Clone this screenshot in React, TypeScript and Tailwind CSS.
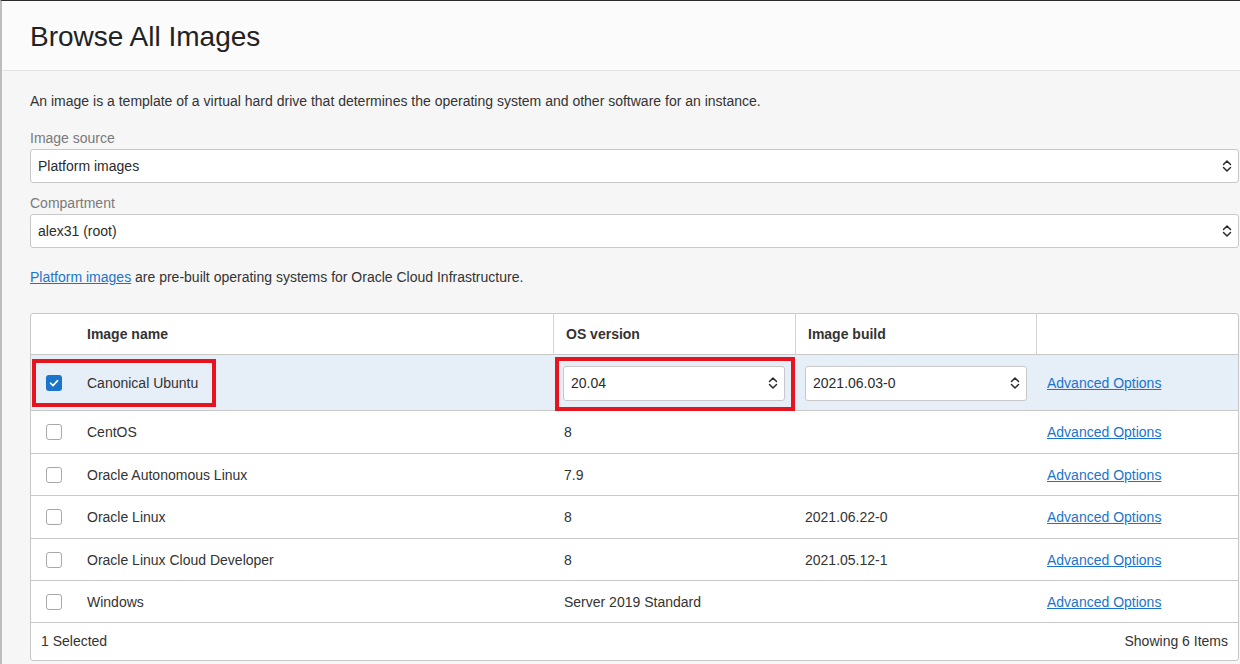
import type { ReactNode } from "react";

type ImageRow = {
  name: string;
  os: string;
  build: string;
  selected?: boolean;
  height: string;
};

const rows: ImageRow[] = [
  { name: "Canonical Ubuntu", os: "20.04", build: "2021.06.03-0", selected: true, height: "h-[56px]" },
  { name: "CentOS", os: "8", build: "", height: "h-[43px]" },
  { name: "Oracle Autonomous Linux", os: "7.9", build: "", height: "h-[42px]" },
  { name: "Oracle Linux", os: "8", build: "2021.06.22-0", height: "h-[43px]" },
  { name: "Oracle Linux Cloud Developer", os: "8", build: "2021.05.12-1", height: "h-[42px]" },
  { name: "Windows", os: "Server 2019 Standard", build: "", height: "h-[42px]" },
];

function UpDown() {
  return (
    <svg width="10" height="16" viewBox="0 0 10 16" fill="none" className="shrink-0">
      <path d="M1.5 6.5 L5 3 L8.5 6.5" stroke="#2b2b2b" strokeWidth="1.5" strokeLinecap="round" strokeLinejoin="round" />
      <path d="M1.5 9.5 L5 13 L8.5 9.5" stroke="#2b2b2b" strokeWidth="1.5" strokeLinecap="round" strokeLinejoin="round" />
    </svg>
  );
}

function Select({ value, className = "" }: { value: string; className?: string }) {
  return (
    <div
      className={`flex items-center justify-between rounded-[3px] border border-[#c8c8c8] bg-white pl-[7px] pr-[6px] text-[14px] text-[#2b2b2b] ${className}`}
    >
      <span className="pt-px">{value}</span>
      <UpDown />
    </div>
  );
}

function Checkbox({ checked }: { checked?: boolean }) {
  if (checked) {
    return (
      <div className="flex h-4 w-4 items-center justify-center rounded-[3px] bg-[#1b74cc]">
        <svg width="12" height="12" viewBox="0 0 12 12" fill="none">
          <path d="M2.5 6.2 L5 8.6 L9.6 3.6" stroke="white" strokeWidth="1.6" strokeLinecap="round" strokeLinejoin="round" />
        </svg>
      </div>
    );
  }
  return <div className="h-4 w-4 rounded-[3px] border border-[#a8a8a8] bg-white" />;
}

function HeadCell({ children, className = "" }: { children?: ReactNode; className?: string }) {
  return <div className={`flex items-center px-3 font-bold ${className}`}>{children}</div>;
}

export default function App() {
  return (
    <div
      className="flex h-[664px] w-full flex-col overflow-hidden border-t border-l-2 border-t-[#2a2a2a] border-l-[#bdbdbd] bg-[#f6f6f6] text-[#333]"
      style={{ fontFamily: '"Liberation Sans", Arial, sans-serif' }}
    >
      <header className="flex h-[70px] shrink-0 items-center border-b border-[#e3e3e3] bg-[#fbfbfb] pl-[28px]">
        <h1 className="pt-[2px] text-[28px] leading-none text-[#222]">Browse All Images</h1>
      </header>

      <main className="flex flex-col pl-[28px] pr-px pt-[20px] text-[14px]">
        <p className="leading-5">
          An image is a template of a virtual hard drive that determines the operating system and other software for an instance.
        </p>

        <label className="mt-[17px] leading-5 text-[#7a7a7a]">Image source</label>
        <Select value="Platform images" className="mt-px h-[34px]" />

        <label className="mt-[10px] leading-5 text-[#7a7a7a]">Compartment</label>
        <Select value="alex31 (root)" className="mt-px h-[34px]" />

        <p className="mt-[19px] leading-5">
          <a className="text-[#1b74cc] underline">Platform images</a> are pre-built operating systems for Oracle Cloud
          Infrastructure.
        </p>

        <div className="mt-[26px] rounded-[3px] border border-[#c8c8c8] bg-white">
          <div className="flex h-[41px] border-b border-[#c8c8c8]">
            <div className="w-[44px] shrink-0" />
            <HeadCell className="w-[478px] shrink-0">Image name</HeadCell>
            <HeadCell className="w-[242px] shrink-0 border-l border-[#d4d4d4]">OS version</HeadCell>
            <HeadCell className="w-[241px] shrink-0 border-l border-[#d4d4d4]">Image build</HeadCell>
            <HeadCell className="flex-1 border-l border-[#d4d4d4]" />
          </div>

          {rows.map((row) => (
            <div
              key={row.name}
              className={`relative flex border-b border-[#c8c8c8] ${row.height} ${row.selected ? "bg-[#e6eef8]" : "bg-white"}`}
            >
              <div className="flex w-[44px] shrink-0 items-center pl-[15px]">
                <Checkbox checked={row.selected} />
              </div>
              <div className="flex w-[478px] shrink-0 items-center px-3 pt-px">{row.name}</div>
              <div className="flex w-[242px] shrink-0 items-center px-[10px] pt-px">
                {row.selected ? <Select value={row.os} className="h-[35px] w-full" /> : <span className="pl-px">{row.os}</span>}
              </div>
              <div className="flex w-[241px] shrink-0 items-center pl-[10px] pr-[9px] pt-px">
                {row.selected ? <Select value={row.build} className="h-[35px] w-full" /> : <span>{row.build}</span>}
              </div>
              <div className="flex flex-1 items-center pl-[11px] pt-px">
                <a className="text-[#1b74cc] underline">Advanced Options</a>
              </div>

              {row.selected && (
                <>
                  <div className="pointer-events-none absolute left-[1px] top-[4px] h-[48px] w-[184px] border-4 border-[#e5141e]" />
                  <div className="pointer-events-none absolute left-[524px] top-[2px] h-[54px] w-[240px] border-4 border-[#e5141e]" />
                </>
              )}
            </div>
          ))}

          <div className="flex h-[37px] items-center justify-between pl-[10px] pr-[10px]">
            <span>1 Selected</span>
            <span>Showing 6 Items</span>
          </div>
        </div>
      </main>
    </div>
  );
}
